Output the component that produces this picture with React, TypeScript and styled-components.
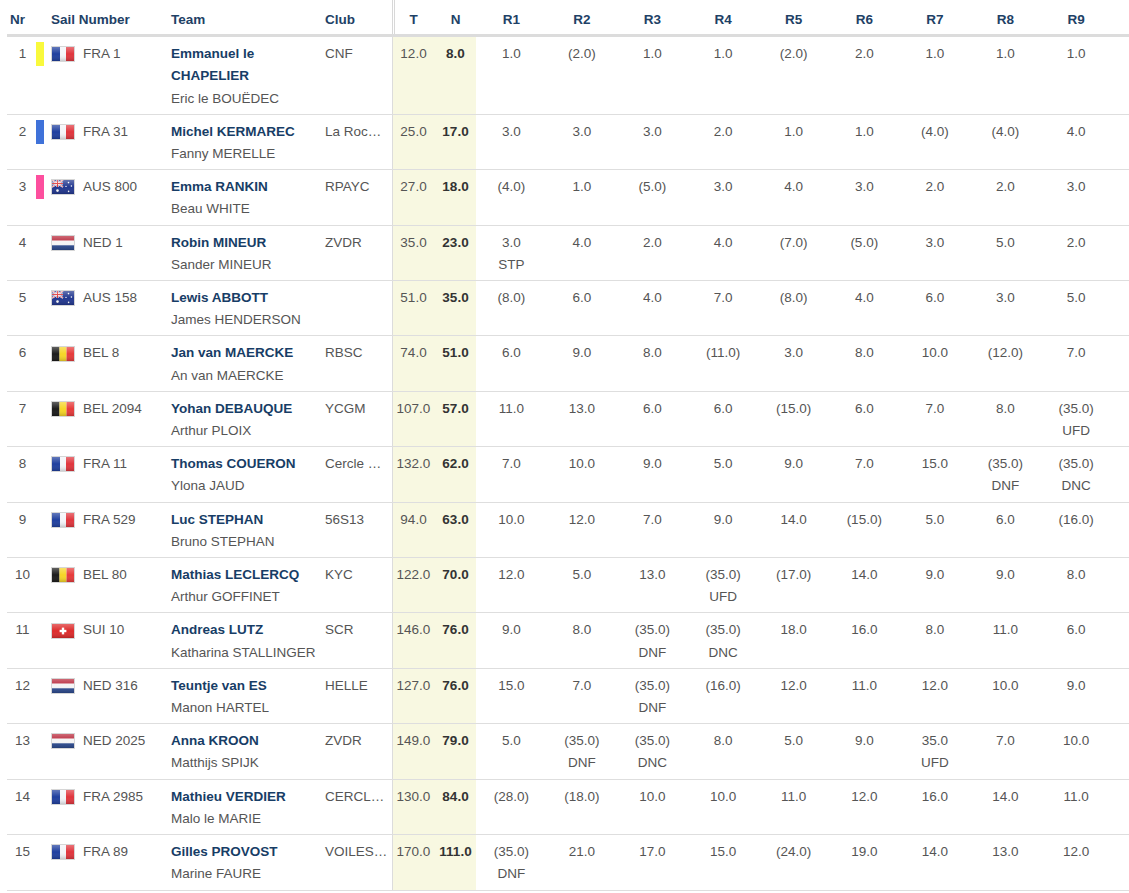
import React from "react";
import styled, { createGlobalStyle } from "styled-components";

type Country = "FRA" | "AUS" | "NED" | "BEL" | "SUI";

interface Entry {
  nr: number;
  mark?: string;
  country: Country;
  sail: string;
  helm: string;
  crew: string;
  club: string;
  total: string;
  net: string;
  races: string[];
}

const GlobalStyle = createGlobalStyle`
  body {
    margin: 0;
    background: #fff;
    font-family: "Liberation Sans", Arial, sans-serif;
    font-size: 13.5px;
    color: #555;
  }
`;

const raceWidth = 70.6;

const columns = [29, 12, 120, 154, 70, 43, 41, ...Array(9).fill(raceWidth), 17.6];

const entries: Entry[] = [
  { nr: 1, mark: "#f9f93c", country: "FRA", sail: "FRA 1", helm: "Emmanuel le CHAPELIER", crew: "Eric le BOUËDEC", club: "CNF", total: "12.0", net: "8.0", races: ["1.0", "(2.0)", "1.0", "1.0", "(2.0)", "2.0", "1.0", "1.0", "1.0"] },
  { nr: 2, mark: "#3f72d9", country: "FRA", sail: "FRA 31", helm: "Michel KERMAREC", crew: "Fanny MERELLE", club: "La Rochelle Nautique", total: "25.0", net: "17.0", races: ["3.0", "3.0", "3.0", "2.0", "1.0", "1.0", "(4.0)", "(4.0)", "4.0"] },
  { nr: 3, mark: "#fd4f9e", country: "AUS", sail: "AUS 800", helm: "Emma RANKIN", crew: "Beau WHITE", club: "RPAYC", total: "27.0", net: "18.0", races: ["(4.0)", "1.0", "(5.0)", "3.0", "4.0", "3.0", "2.0", "2.0", "3.0"] },
  { nr: 4, country: "NED", sail: "NED 1", helm: "Robin MINEUR", crew: "Sander MINEUR", club: "ZVDR", total: "35.0", net: "23.0", races: ["3.0 STP", "4.0", "2.0", "4.0", "(7.0)", "(5.0)", "3.0", "5.0", "2.0"] },
  { nr: 5, country: "AUS", sail: "AUS 158", helm: "Lewis ABBOTT", crew: "James HENDERSON", club: "", total: "51.0", net: "35.0", races: ["(8.0)", "6.0", "4.0", "7.0", "(8.0)", "4.0", "6.0", "3.0", "5.0"] },
  { nr: 6, country: "BEL", sail: "BEL 8", helm: "Jan van MAERCKE", crew: "An van MAERCKE", club: "RBSC", total: "74.0", net: "51.0", races: ["6.0", "9.0", "8.0", "(11.0)", "3.0", "8.0", "10.0", "(12.0)", "7.0"] },
  { nr: 7, country: "BEL", sail: "BEL 2094", helm: "Yohan DEBAUQUE", crew: "Arthur PLOIX", club: "YCGM", total: "107.0", net: "57.0", races: ["11.0", "13.0", "6.0", "6.0", "(15.0)", "6.0", "7.0", "8.0", "(35.0) UFD"] },
  { nr: 8, country: "FRA", sail: "FRA 11", helm: "Thomas COUERON", crew: "Ylona JAUD", club: "Cercle Nautique", total: "132.0", net: "62.0", races: ["7.0", "10.0", "9.0", "5.0", "9.0", "7.0", "15.0", "(35.0) DNF", "(35.0) DNC"] },
  { nr: 9, country: "FRA", sail: "FRA 529", helm: "Luc STEPHAN", crew: "Bruno STEPHAN", club: "56S13", total: "94.0", net: "63.0", races: ["10.0", "12.0", "7.0", "9.0", "14.0", "(15.0)", "5.0", "6.0", "(16.0)"] },
  { nr: 10, country: "BEL", sail: "BEL 80", helm: "Mathias LECLERCQ", crew: "Arthur GOFFINET", club: "KYC", total: "122.0", net: "70.0", races: ["12.0", "5.0", "13.0", "(35.0) UFD", "(17.0)", "14.0", "9.0", "9.0", "8.0"] },
  { nr: 11, country: "SUI", sail: "SUI 10", helm: "Andreas LUTZ", crew: "Katharina STALLINGER", club: "SCR", total: "146.0", net: "76.0", races: ["9.0", "8.0", "(35.0) DNF", "(35.0) DNC", "18.0", "16.0", "8.0", "11.0", "6.0"] },
  { nr: 12, country: "NED", sail: "NED 316", helm: "Teuntje van ES", crew: "Manon HARTEL", club: "HELLE", total: "127.0", net: "76.0", races: ["15.0", "7.0", "(35.0) DNF", "(16.0)", "12.0", "11.0", "12.0", "10.0", "9.0"] },
  { nr: 13, country: "NED", sail: "NED 2025", helm: "Anna KROON", crew: "Matthijs SPIJK", club: "ZVDR", total: "149.0", net: "79.0", races: ["5.0", "(35.0) DNF", "(35.0) DNC", "8.0", "5.0", "9.0", "35.0 UFD", "7.0", "10.0"] },
  { nr: 14, country: "FRA", sail: "FRA 2985", helm: "Mathieu VERDIER", crew: "Malo le MARIE", club: "CERCLE NAUTIQUE", total: "130.0", net: "84.0", races: ["(28.0)", "(18.0)", "10.0", "10.0", "11.0", "12.0", "16.0", "14.0", "11.0"] },
  { nr: 15, country: "FRA", sail: "FRA 89", helm: "Gilles PROVOST", crew: "Marine FAURE", club: "VOILES DE SAINT-MALO", total: "170.0", net: "111.0", races: ["(35.0) DNF", "21.0", "17.0", "15.0", "(24.0)", "19.0", "14.0", "13.0", "12.0"] },
];

const Table = styled.table`
  table-layout: fixed;
  width: 1122px;
  margin-left: 7px;
  border-collapse: collapse;
  line-height: 22.2px;
`;

const Col = styled.col<{ $w: number }>`
  width: ${(p) => p.$w}px;
`;

const HeadCell = styled.th<{ $align?: string; $split?: boolean }>`
  padding: 9px 3px 3px;
  text-align: ${(p) => p.$align ?? "center"};
  font-weight: bold;
  color: #1e4166;
  white-space: nowrap;
  border-bottom: 3px solid #dcdcdc;
  box-shadow: ${(p) =>
    p.$split
      ? "inset 1px 0 0 #d8d8d8, inset 2px 0 0 #fff, inset 3px 0 0 #d8d8d8"
      : "none"};
`;

const Cell = styled.td<{ $align?: string }>`
  padding: 6px 3px 4px;
  vertical-align: top;
  text-align: ${(p) => p.$align ?? "left"};
  border-bottom: 1px solid #dedede;
`;

const NrCell = styled(Cell)`
  padding-left: 5px;
  text-align: center;
`;

const MarkCell = styled(Cell)`
  padding: 5px 0 0;
`;

const Mark = styled.div<{ $color: string }>`
  width: 8px;
  height: 24px;
  background: ${(p) => p.$color};
`;

const SailBox = styled.div`
  display: flex;
  align-items: center;
  gap: 8px;
  white-space: nowrap;
`;

const FlagFrame = styled.span`
  display: inline-block;
  flex: none;
  width: 22px;
  height: 14px;
  border: 1px solid #d6d6d6;
  svg {
    display: block;
  }
`;

const Helm = styled.div`
  font-weight: bold;
  color: #173d66;
`;

const Crew = styled.div`
  white-space: nowrap;
`;

const ClubCell = styled(Cell)`
  padding-right: 4px;
  white-space: nowrap;
  overflow: hidden;
  text-overflow: ellipsis;
`;

const ScoreCell = styled(Cell)<{ $first?: boolean; $strong?: boolean }>`
  text-align: center;
  padding-left: 1px;
  padding-right: 1px;
  background: #f8f8e1;
  white-space: nowrap;
  font-weight: ${(p) => (p.$strong ? "bold" : "normal")};
  color: ${(p) => (p.$strong ? "#333" : "#555")};
  box-shadow: ${(p) => (p.$first ? "inset 1px 0 0 #dcdcdc" : "none")};
`;

const RaceCell = styled(Cell)`
  text-align: center;
  white-space: nowrap;
`;

const Gloss = () => (
  <>
    <defs>
      <linearGradient id="gloss" x1="0" y1="0" x2="0" y2="1">
        <stop offset="0" stopColor="#fff" stopOpacity="0.3" />
        <stop offset="0.5" stopColor="#fff" stopOpacity="0" />
        <stop offset="1" stopColor="#000" stopOpacity="0.18" />
      </linearGradient>
    </defs>
    <rect width="22" height="14" fill="url(#gloss)" />
  </>
);

const FlagArt = ({ country }: { country: Country }) => {
  switch (country) {
    case "FRA":
      return (
        <>
          <rect width="8" height="14" fill="#1f3f9e" />
          <rect x="8" width="6" height="14" fill="#f4f4f8" />
          <rect x="14" width="8" height="14" fill="#e0353d" />
        </>
      );
    case "BEL":
      return (
        <>
          <rect width="7.5" height="14" fill="#1b1b1b" />
          <rect x="7.5" width="7" height="14" fill="#f6d526" />
          <rect x="14.5" width="7.5" height="14" fill="#e63a3a" />
        </>
      );
    case "NED":
      return (
        <>
          <rect width="22" height="4.7" fill="#b8283a" />
          <rect y="4.7" width="22" height="4.6" fill="#f5f5f5" />
          <rect y="9.3" width="22" height="4.7" fill="#2c4a8e" />
        </>
      );
    case "SUI":
      return (
        <>
          <rect width="22" height="14" fill="#dd2a2a" />
          <rect x="9.8" y="3.6" width="2.4" height="6.8" fill="#fff" />
          <rect x="7.6" y="5.8" width="6.8" height="2.4" fill="#fff" />
        </>
      );
    case "AUS":
      return (
        <>
          <rect width="22" height="14" fill="#22378f" />
          <path d="M0 0L11 7M11 0L0 7" stroke="#fff" strokeWidth="1.6" />
          <path d="M0 0L11 7M11 0L0 7" stroke="#d33" strokeWidth="0.6" />
          <path d="M5.5 0V7M0 3.5H11" stroke="#fff" strokeWidth="2.2" />
          <path d="M5.5 0V7M0 3.5H11" stroke="#d33" strokeWidth="1.1" />
          <circle cx="5.5" cy="10.6" r="1.3" fill="#fff" />
          <circle cx="16.5" cy="2.6" r="0.8" fill="#fff" />
          <circle cx="19.4" cy="6" r="0.8" fill="#fff" />
          <circle cx="14" cy="6.4" r="0.7" fill="#fff" />
          <circle cx="16.6" cy="11.4" r="0.8" fill="#fff" />
        </>
      );
  }
};

const Flag = ({ country }: { country: Country }) => (
  <FlagFrame>
    <svg width="22" height="14" viewBox="0 0 22 14">
      <FlagArt country={country} />
      <Gloss />
    </svg>
  </FlagFrame>
);

const Race = ({ value }: { value: string }) => {
  const [score, code] = value.split(" ");
  return (
    <RaceCell>
      <div>{score}</div>
      {code && <div>{code}</div>}
    </RaceCell>
  );
};

const App = () => {
  return (
    <>
      <GlobalStyle />
      <Table>
        <colgroup>
          {columns.map((w, i) => (
            <Col key={i} $w={w} />
          ))}
        </colgroup>
        <thead>
          <tr>
            <HeadCell $align="left">Nr</HeadCell>
            <HeadCell />
            <HeadCell $align="left">Sail Number</HeadCell>
            <HeadCell $align="left">Team</HeadCell>
            <HeadCell $align="left">Club</HeadCell>
            <HeadCell $split>T</HeadCell>
            <HeadCell>N</HeadCell>
            {Array.from({ length: 9 }, (_, i) => (
              <HeadCell key={i}>R{i + 1}</HeadCell>
            ))}
            <HeadCell />
          </tr>
        </thead>
        <tbody>
          {entries.map((e) => (
            <tr key={e.nr}>
              <NrCell>{e.nr}</NrCell>
              <MarkCell>{e.mark && <Mark $color={e.mark} />}</MarkCell>
              <Cell>
                <SailBox>
                  <Flag country={e.country} />
                  {e.sail}
                </SailBox>
              </Cell>
              <Cell>
                <Helm>{e.helm}</Helm>
                <Crew>{e.crew}</Crew>
              </Cell>
              <ClubCell>{e.club}</ClubCell>
              <ScoreCell $first>{e.total}</ScoreCell>
              <ScoreCell $strong>{e.net}</ScoreCell>
              {e.races.map((r, i) => (
                <Race key={i} value={r} />
              ))}
              <Cell />
            </tr>
          ))}
        </tbody>
      </Table>
    </>
  );
};

export default App;
